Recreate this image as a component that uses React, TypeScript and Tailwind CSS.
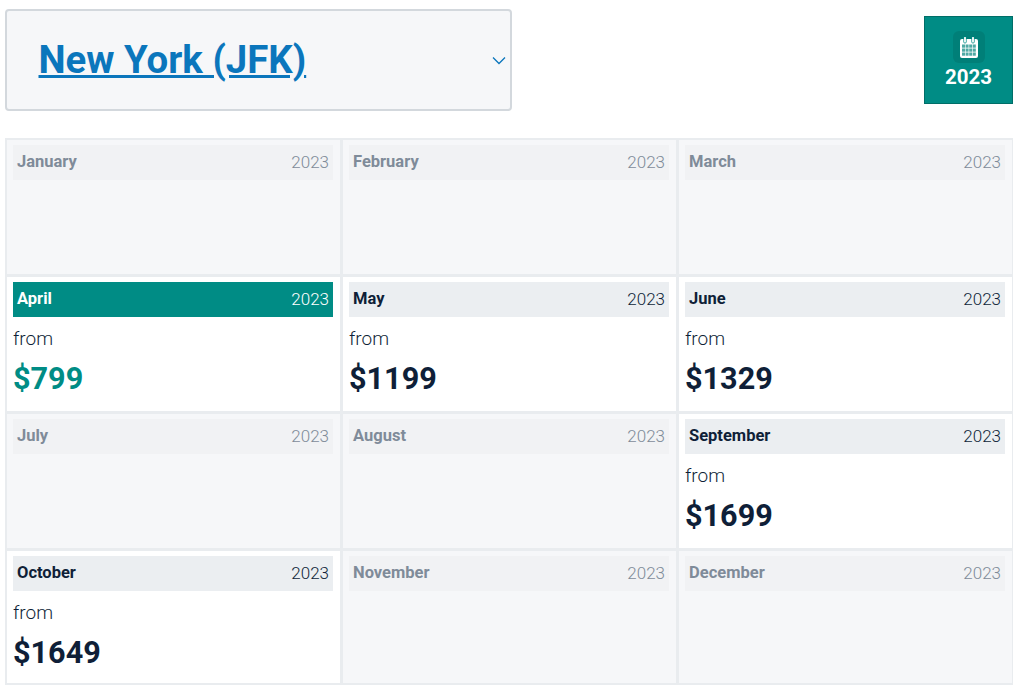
const MONTHS: { name: string; price?: string; active?: boolean }[] = [
  { name: 'January' },
  { name: 'February' },
  { name: 'March' },
  { name: 'April', price: '$799', active: true },
  { name: 'May', price: '$1199' },
  { name: 'June', price: '$1329' },
  { name: 'July' },
  { name: 'August' },
  { name: 'September', price: '$1699' },
  { name: 'October', price: '$1649' },
  { name: 'November' },
  { name: 'December' },
];

function CalendarIcon() {
  const cols = [2, 5.6, 9.2, 12.8];
  const rows = [7.5, 11.5, 15.5];
  return (
    <svg width="18" height="21" viewBox="0 0 18 21" fill="none">
      <rect x="0" y="2" width="18" height="19" rx="2" fill="white" />
      {rows.map((y) =>
        cols.map((x) => <rect key={`${x}-${y}`} x={x} y={y} width="3" height="3.200" fill="#4fa9a4" />),
      )}
      <path d="M5 .8v4M13 .8v4" stroke="#008c85" strokeWidth="3.200" strokeLinecap="round" />
      <path d="M5 .8v4M13 .8v4" stroke="white" strokeWidth="1.800" strokeLinecap="round" />
    </svg>
  );
}

function MonthCell({ name, price, active }: { name: string; price?: string; active?: boolean }) {
  const hasPrice = !!price;
  return (
    <div className={`pl-[6px] pr-[7px] pt-[5px] ${hasPrice ? 'bg-white' : 'bg-[#f6f7f9]'}`}>
      <div
        className={`flex h-[35px] items-center justify-between px-[4px] ${
          active ? 'bg-[#008c85] text-white' : hasPrice ? 'bg-[#ebeef1] text-[#0f1f38]' : 'bg-[#f1f2f4] text-[#7f8b99]'
        }`}
      >
        <span className="text-[16.500px] font-bold">{name}</span>
        <span className="text-[17px] font-light">2023</span>
      </div>
      {hasPrice && (
        <div className="pt-[8px]">
          <div className="text-[19px] leading-[27px] font-light text-[#0f1f38]">from</div>
          <div className={`mt-[7px] text-[30.600px] leading-[40px] font-bold ${active ? 'text-[#008c85]' : 'text-[#0f1f38]'}`}>
            {price}
          </div>
        </div>
      )}
    </div>
  );
}

export default function App() {
  return (
    <div className="h-[693px] w-[1020px] bg-white font-['Roboto',sans-serif]">
      <div className="flex items-start justify-between pl-[5px] pr-[7px] pt-[9px]">
        <div className="flex h-[102px] w-[507px] items-center justify-between rounded-[4px] border-2 border-[#d3d8dd] bg-[#f6f7f9] pl-[31.500px] pr-[4px]">
          <a className="text-[38.400px] font-bold text-[#0b76bc] underline">New York (JFK)</a>
          <svg width="14" height="9" viewBox="0 0 14 9" fill="none" stroke="#0b76bc" strokeWidth="1.300">
            <path d="M1 1.500l6 6 6-6" />
          </svg>
        </div>
        <div className="mt-[7px] flex h-[88px] w-[89px] flex-col items-center border border-[#006e68] bg-[#008c85] pt-[14px]">
          <div className="flex h-[32px] w-[32px] items-center justify-center rounded-[6px] bg-[#007f78]">
            <CalendarIcon />
          </div>
          <div className="text-[20.500px] leading-[28px] font-bold text-white">2023</div>
        </div>
      </div>
      <div className="mx-[5px] mt-[27px] grid w-[1008px] grid-cols-[333px_333px_333px] grid-rows-[134px_134px_134px_132px] gap-[3px] bg-[#e9ecef] pb-[2px] pl-[2px] pr-[1px] pt-[2px]">
        {MONTHS.map((m) => (
          <MonthCell key={m.name} {...m} />
        ))}
      </div>
    </div>
  );
}
